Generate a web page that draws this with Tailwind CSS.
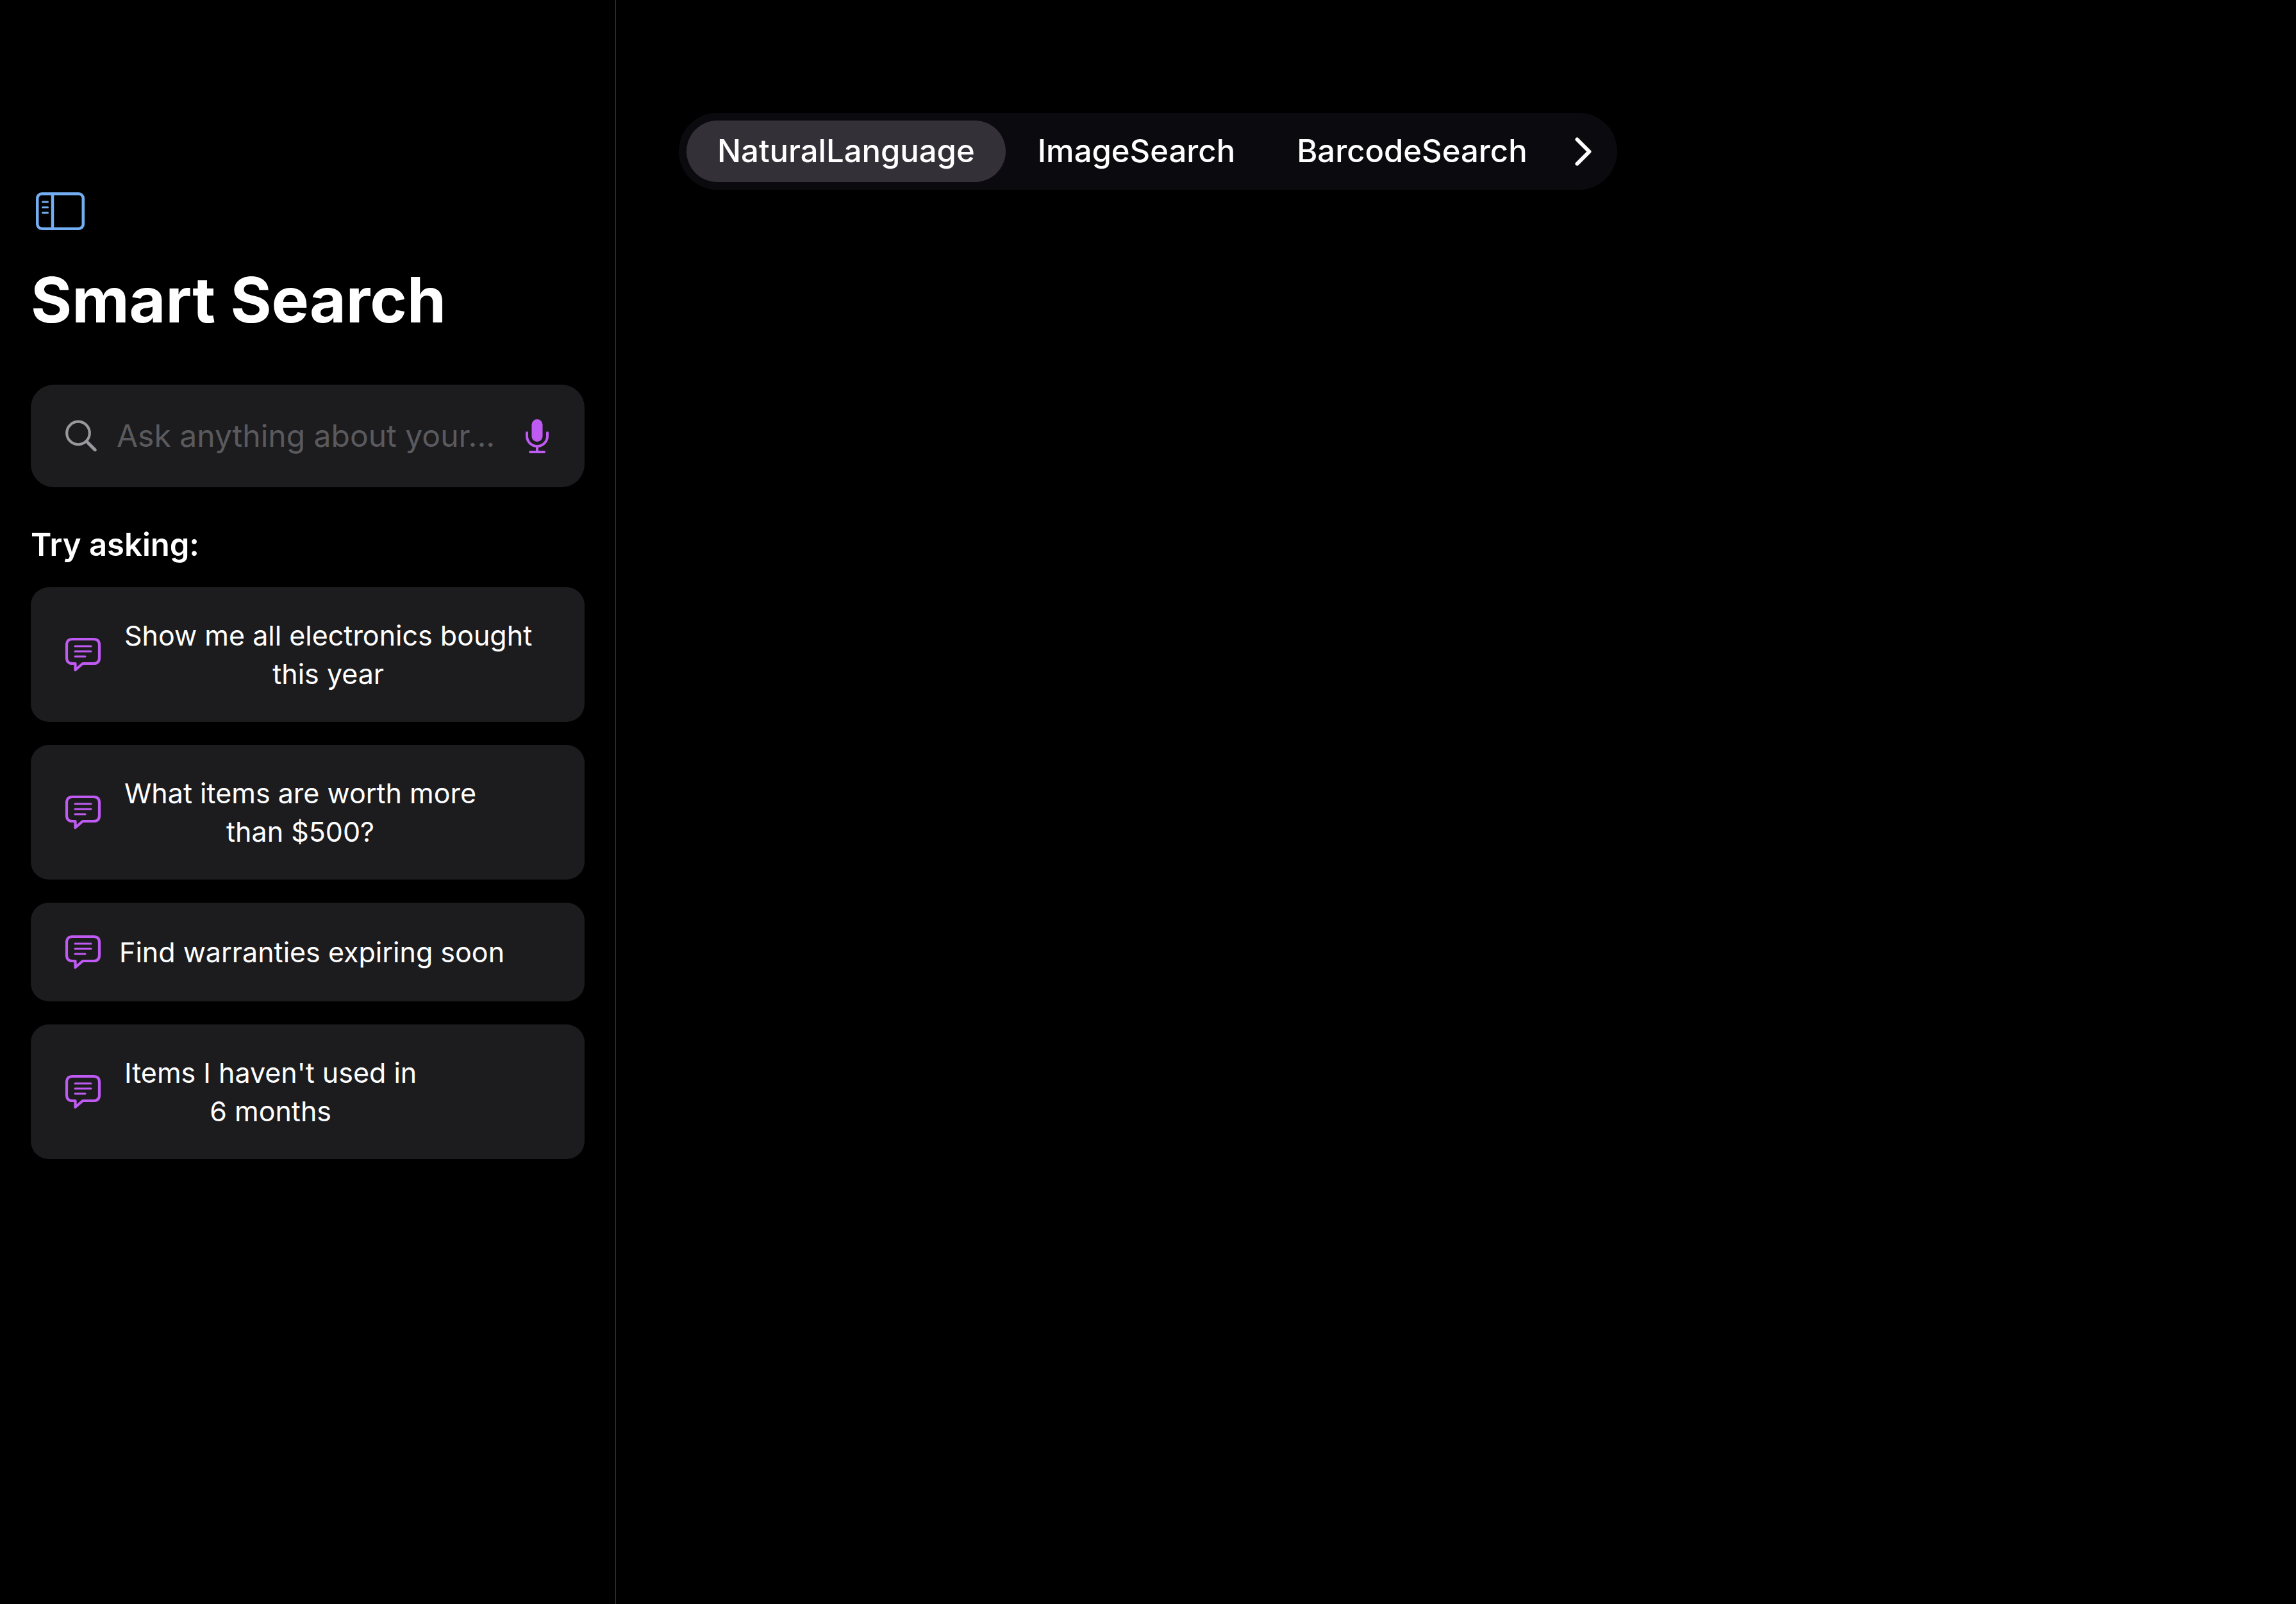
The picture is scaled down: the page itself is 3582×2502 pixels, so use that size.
<!DOCTYPE html>
<html lang="en">
<head>
<meta charset="utf-8">
<title>Smart Search</title>
<script src="https://cdn.jsdelivr.net/npm/@tailwindcss/browser@4"></script>
</head>
<body class="bg-black text-white font-['Inter',sans-serif]">
<svg class="hidden" aria-hidden="true">
  <symbol id="bubble" viewBox="0 0 56 54">
    <path d="M11 3H44Q53 3 53 12V32Q53 41 44 41H27L15.500 51V41H11Q2 41 2 32V12Q2 3 11 3Z" fill="none" stroke="currentColor" stroke-width="4.200" stroke-linejoin="round"/>
    <path d="M15 14H40M15 22H40M15 30H31" fill="none" stroke="currentColor" stroke-width="3" stroke-linecap="round"/>
  </symbol>
</svg>
<div class="flex min-h-screen">
  <aside class="flex w-[961px] shrink-0 flex-col border-r border-[#38383a] px-12 pt-[297px]">
    <button type="button" aria-label="Toggle sidebar" class="ml-2 h-16 w-[76px] text-[#74aef2]">
      <svg class="h-16 w-[76px]" viewBox="0 0 76 64" fill="none" stroke="currentColor" stroke-width="4.500" stroke-linecap="round">
        <rect x="2.250" y="5.250" width="71.500" height="54.500" rx="7"/>
        <path d="M26 5V60"/>
        <path d="M10.500 18H18.500M10.500 26.500H18.500M10.500 35H18.500" stroke-width="3"/>
      </svg>
    </button>
    <h1 class="mt-[47px] text-[98px] leading-[120px] font-bold">Smart Search</h1>
    <div class="mt-[72px] flex h-[160px] items-center rounded-[36px] bg-[#1c1c1e] px-[54px]">
      <svg class="size-[50px] shrink-0 text-[#98989f]" viewBox="0 0 50 50" fill="none" stroke="currentColor" stroke-width="4.200" stroke-linecap="round" aria-hidden="true">
        <circle cx="20" cy="20.500" r="17.800"/><path d="M33 33.500L46.500 47"/><path d="M35.500 36L46 46.500" stroke-width="5"/>
      </svg>
      <input type="text" aria-label="Search" placeholder="Ask anything about your..." class="ml-[30px] w-0 flex-1 bg-transparent text-[48px] leading-[60px] outline-none placeholder:text-[#5a5a5e]">
      <button type="button" aria-label="Dictate" class="ml-8 h-[56px] w-[38px] shrink-0 text-[#bf5af2]">
        <svg class="h-[56px] w-[38px]" viewBox="0 0 38 56" fill="none" stroke="currentColor" stroke-width="4" stroke-linecap="round">
          <rect x="9.500" y="2" width="17" height="35" rx="8.500" fill="currentColor" stroke="none"/>
          <path d="M2 23V28A16 16 0 0 0 34 28V23M18 44V53M7 53H29"/>
        </svg>
      </button>
    </div>
    <h2 class="mt-[60px] text-[49px] leading-[60px] font-semibold">Try asking:</h2>
    <div class="mt-9 flex flex-col gap-9">
      <button type="button" class="flex items-center rounded-[28px] bg-[#1c1c1e] px-[54px] py-[45px]">
        <svg class="h-16 w-[56px] shrink-0 text-[#bf5af2]" aria-hidden="true"><use href="#bubble"/></svg>
        <span class="ml-9 text-center text-[43px] leading-[60px]">Show me all electronics bought<br>this year</span>
      </button>
      <button type="button" class="flex items-center rounded-[28px] bg-[#1c1c1e] px-[54px] py-[45px]">
        <svg class="h-16 w-[56px] shrink-0 text-[#bf5af2]" aria-hidden="true"><use href="#bubble"/></svg>
        <span class="ml-9 text-center text-[43px] leading-[60px]">What items are worth more<br>than $500?</span>
      </button>
      <button type="button" class="flex items-center rounded-[28px] bg-[#1c1c1e] px-[54px] py-[45px]">
        <svg class="h-16 w-[56px] shrink-0 text-[#bf5af2]" aria-hidden="true"><use href="#bubble"/></svg>
        <span class="ml-7 text-center text-[43px] leading-[60px]">Find warranties expiring soon</span>
      </button>
      <button type="button" class="flex items-center rounded-[28px] bg-[#1c1c1e] px-[54px] py-[45px]">
        <svg class="h-16 w-[56px] shrink-0 text-[#bf5af2]" aria-hidden="true"><use href="#bubble"/></svg>
        <span class="ml-9 text-center text-[43px] leading-[60px]">Items I haven't used in<br>6 months</span>
      </button>
    </div>
  </aside>
  <main class="min-w-0 flex-1 pt-44 pl-[98px]">
    <nav aria-label="Search modes" class="flex w-fit items-center rounded-full bg-[#0b0a0f] p-3 text-[49px] leading-[96px] font-medium">
      <button type="button" aria-current="page" class="rounded-full bg-[#333137] px-12">NaturalLanguage</button>
      <button type="button" class="ml-1 rounded-full px-[46px]">ImageSearch</button>
      <button type="button" class="ml-1 rounded-full px-[46px]">BarcodeSearch</button>
      <button type="button" aria-label="More" class="flex h-24 items-center px-[27px]">
        <svg class="h-[46px] w-[28px]" viewBox="0 0 28 46" fill="none" stroke="currentColor" stroke-width="6" stroke-linecap="round" stroke-linejoin="round"><path d="M4.500 4.500L23.500 23.500L4.500 42.500"/></svg>
      </button>
    </nav>
  </main>
</div>
</body>
</html>
